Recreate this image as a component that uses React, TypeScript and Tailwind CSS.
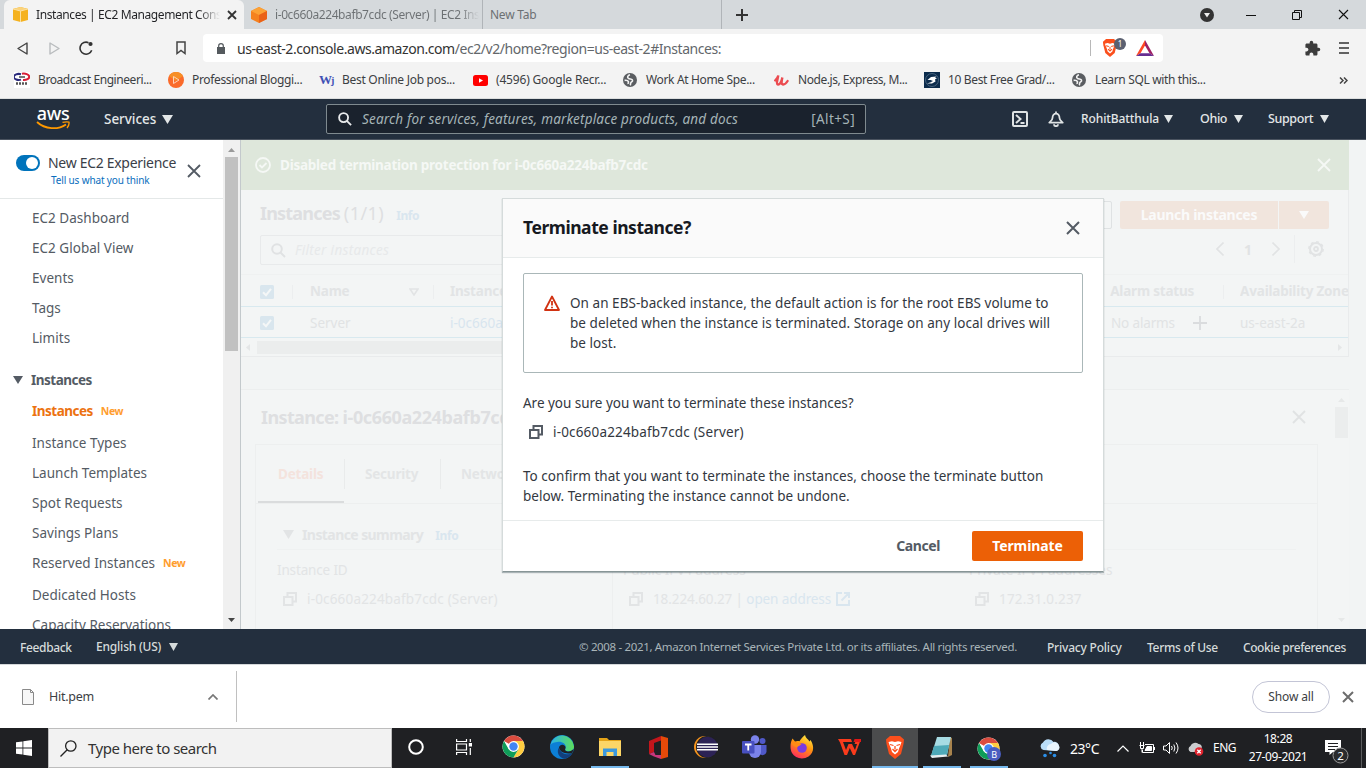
import React from "react";
import { MdExtension } from "react-icons/md";

function Caret({ className = "", w = 10, h = 8 }: { className?: string; w?: number; h?: number }) {
  return (
    <svg width={w} height={h} viewBox="0 0 10 8" preserveAspectRatio="none" className={"shrink-0 " + className} fill="currentColor">
      <path d="M0 0H10L5 8Z" />
    </svg>
  );
}

function Cross({ size = 14, stroke = 2, className = "" }: { size?: number; stroke?: number; className?: string }) {
  return (
    <svg width={size} height={size} viewBox={`0 0 ${size} ${size}`} className={"shrink-0 " + className} stroke="currentColor" strokeWidth={stroke} fill="none">
      <path d={`M1 1L${size - 1} ${size - 1}M${size - 1} 1L1 ${size - 1}`} />
    </svg>
  );
}

function CopyIcon({ className = "" }: { className?: string }) {
  return (
    <svg width="14" height="14" viewBox="0 0 14 14" className={"shrink-0 " + className} fill="none" stroke="currentColor" strokeWidth="2">
      <path d="M1 5H9.5V13H1Z" />
      <path d="M4.5 4V1H13V9.5H10" />
    </svg>
  );
}

function SearchIcon({ size, className = "" }: { size: number; className?: string }) {
  return (
    <svg width={size} height={size} viewBox="0 0 15 15" className={"shrink-0 " + className} fill="none" stroke="currentColor" strokeWidth="2">
      <circle cx="6" cy="6" r="4.8" />
      <path d="M9.5 9.5L14 14" />
    </svg>
  );
}

function Globe() {
  return (
    <svg width="14" height="14" viewBox="0 0 14 14" className="shrink-0">
      <circle cx="7" cy="7" r="7" fill="#5a5d61" />
      <path d="M7 1.8C4.6 2.4 4 4.4 5.4 5.4C6.8 6.4 9.4 5.6 9.6 7.4C9.8 8.8 8.2 8.8 7.8 9.8C7.4 10.800 7.6 11.800 7.2 12.200M1.600 7.400C3 7.200 5 7.600 5.400 8.600C5.700 9.500 5 10 5.200 11" fill="none" stroke="#f3f3f3" strokeWidth="1.600" />
    </svg>
  );
}

function BraveLion({ w, h }: { w: number; h: number }) {
  return (
    <svg width={w} height={h} viewBox="0 0 20 23" className="shrink-0">
      <path d="M5 0H15L19 3.500L18.500 8L16 18L10 23L4 18L1.500 8L1 3.500Z" fill="#fb4f1c" />
      <path d="M3.500 6L7 5.200L10 6L13 5.200L16.500 6L15.500 9L14 12.500L13 16L10 18.500L7 16L6 12.500L4.500 9Z" fill="#fff" />
      <path d="M5 8.500L8.500 9.500M15 8.500L11.500 9.500M10 10V13.500M7.500 13L10 15.500L12.500 13" stroke="#fb4f1c" strokeWidth="1.300" fill="none" />
    </svg>
  );
}

function Tabs() {
  return (
    <div className="flex h-[29px] bg-[#d5d9dc] pl-1 text-[12px] tracking-[-0.4px]">
      <div className="flex w-[240px] items-center rounded-t-md bg-[#f3f3f3] pl-[9px]">
        <svg width="15" height="15" viewBox="0 0 15 15" className="shrink-0">
          <path d="M0 2L7.5 0L15 2V13L7.5 15L0 13Z" fill="#f5b21f" />
          <path d="M0 2L7.5 4L15 2L7.5 0Z" fill="#fbd37b" />
          <path d="M7.5 4V15M0 2L7.5 4L15 2" stroke="#fce0a0" strokeWidth="1" fill="none" />
        </svg>
        <span className="ml-2 w-[184px] overflow-hidden bg-gradient-to-r from-[#202124] from-88% to-transparent bg-clip-text whitespace-nowrap text-transparent">Instances | EC2 Management Console</span>
        <Cross size={10} stroke={1.8} className="ml-[7px] text-[#333]" />
      </div>
      <div className="flex w-[239px] items-center border-r border-[#b0b4b8] pl-[7px]">
        <svg width="16" height="16" viewBox="0 0 16 16" className="shrink-0">
          <path d="M8 0L16 4V12L8 16L0 12V4Z" fill="#f58220" />
          <path d="M8 0L16 4L8 8L0 4Z" fill="#fca236" />
          <path d="M8 8L16 4V12L8 16Z" fill="#ea6218" />
        </svg>
        <span className="ml-2 w-[204px] overflow-hidden bg-gradient-to-r from-[#6c7073] from-90% to-transparent bg-clip-text whitespace-nowrap text-transparent">i-0c660a224bafb7cdc (Server) | EC2 Instances</span>
      </div>
      <div className="flex w-[239px] items-center border-r border-[#b0b4b8] pl-[7px] tracking-[-0.25px] text-[#6c7073]">New Tab</div>
      <svg width="12" height="12" viewBox="0 0 12 12" className="mt-[9px] ml-[14px]" stroke="#333" strokeWidth="2"><path d="M6 0V12M0 6H12" /></svg>
      <div className="ml-auto flex items-center">
        <svg width="14" height="14" viewBox="0 0 14 14" className="mr-[32px]"><circle cx="7" cy="7" r="7" fill="#333" /><path d="M4 5H10L7 9.5Z" fill="#eee" /></svg>
        <svg width="10" height="10" viewBox="0 0 10 10" className="mr-[36px]" stroke="#111"><path d="M0 5.5H10" /></svg>
        <svg width="10" height="10" viewBox="0 0 10 10" className="mr-[36px]" stroke="#111" fill="none"><path d="M0.5 2.5H7.5V9.5H0.5ZM2.5 2.5V0.5H9.5V7.5H7.5" /></svg>
        <Cross size={11} stroke={1.1} className="mr-[17px] text-[#111]" />
      </div>
    </div>
  );
}

function Toolbar() {
  return (
    <div className="flex h-[38px] items-center bg-[#f3f3f3]">
      <svg width="11" height="13" viewBox="0 0 11 13" className="ml-[17px]" fill="none" stroke="#444" strokeWidth="1.4" strokeLinejoin="round"><path d="M10 1V12L1 6.5Z" /></svg>
      <svg width="11" height="13" viewBox="0 0 11 13" className="ml-[21px]" fill="none" stroke="#b9bcbe" strokeWidth="1.4" strokeLinejoin="round"><path d="M1 1V12L10 6.5Z" /></svg>
      <svg width="14" height="14" viewBox="0 0 14 14" className="ml-[19px]" fill="none" stroke="#333" strokeWidth="1.6"><path d="M9.500 1.700A6 6 0 1 0 12.700 9.200" /><circle cx="11.500" cy="3" r="2.100" fill="#333" stroke="none" /></svg>
      <svg width="10" height="14" viewBox="0 0 10 14" className="ml-[83px]" fill="none" stroke="#444" strokeWidth="1.5"><path d="M1 1H9V12.5L5 9.5L1 12.5Z" /></svg>
      <div className="ml-[17px] flex h-[28px] w-[960px] items-center rounded bg-white pl-[14px]">
        <svg width="8" height="11" viewBox="0 0 8 11" className="shrink-0"><path d="M0 4H8V11H0Z" fill="#555a5e" /><path d="M1.7 4.5V2.8A2.3 2.1 0 0 1 6.3 2.8V4.5" fill="none" stroke="#555a5e" strokeWidth="1.2" /></svg>
        <span className="ml-[12px] text-[14px] tracking-[-0.44px] text-[#63676b]"><span className="text-[#333]">us-east-2.console.aws.amazon.com</span>/ec2/v2/home?region=us-east-2#Instances:</span>
        <div className="ml-auto flex items-center">
          <div className="h-4 w-px bg-[#b8b8b8]" />
          <div className="relative ml-[11px] h-[18px] w-[16px]"><BraveLion w={16} h={18} /><span className="absolute -top-[1px] left-[12px] flex h-[12px] w-[12px] items-center justify-center rounded-full bg-[#5b6070] text-[8px] text-white">1</span></div>
          <svg width="18" height="16" viewBox="0 0 18 16" className="mr-[9px] ml-[18px]">
            <path d="M9 0L0 16L4.5 13.2L9 5.5Z" fill="#ff4724" /><path d="M9 0L18 16L13.5 13.2L9 5.5Z" fill="#9e1f63" /><path d="M0 16H18L13.5 13.2H4.5Z" fill="#662d91" />
          </svg>
        </div>
      </div>
      <MdExtension size={17} className="ml-auto text-[#3c3c3c]" />
      <svg width="10" height="12" viewBox="0 0 10 12" className="mr-[17px] ml-[18px]" stroke="#333" strokeWidth="1.5"><path d="M0 1H10M0 6H10M0 11H10" /></svg>
    </div>
  );
}

function Bookmarks() {
  return (
    <div className="flex h-[32px] items-center border-b border-[#dcdede] bg-[#f3f3f3] pb-[5px] pl-[14px] text-[12px] tracking-[-0.35px] whitespace-nowrap text-[#3c4043]">
      <div className="flex w-[154px] items-center tracking-[-0.42px]">
        <svg width="16" height="16" viewBox="0 0 16 16" className="mr-2"><path d="M0 0H16V16H0Z" fill="#fff" /><path d="M7 2.2A5 3 0 1 0 7 7.6" fill="none" stroke="#2a2a7c" strokeWidth="2" /><path d="M8 1.8A5.5 3.2 0 1 1 9 8" fill="none" stroke="#d81f36" strokeWidth="2" /><path d="M5 5H11" stroke="#777" strokeWidth="2" /><path d="M2 11.500H14" stroke="#555" strokeWidth="2.400" strokeDasharray="2 1" /></svg>
        Broadcast Engineeri...
      </div>
      <div className="flex w-[151px] items-center">
        <svg width="16" height="16" viewBox="0 0 16 16" className="mr-2"><circle cx="8" cy="8" r="8" fill="#fa6a2a" /><path d="M1 4A8 8 0 0 1 15 4L8 9Z" fill="#f78f25" /><path d="M5.5 4.5V11.5L11 8Z" fill="none" stroke="#ffd3b8" strokeWidth="1" /></svg>
        Professional Bloggi...
      </div>
      <div className="flex w-[154px] items-center tracking-[-0.28px]">
        <span className="mr-[7px] w-[16px] font-['Liberation_Serif'] text-[13px] font-bold tracking-[-1px] text-[#3f51b5]">W<span className="text-[10px]">j</span></span>
        Best Online Job pos...
      </div>
      <div className="flex w-[150px] items-center tracking-[-0.18px]">
        <svg width="15" height="11" viewBox="0 0 15 11" className="mr-[8px]"><rect width="15" height="11" rx="2.5" fill="#f00" /><path d="M6 3.2V7.8L10 5.5Z" fill="#fff" /></svg>
        (4596) Google Recr...
      </div>
      <div className="flex w-[151px] items-center gap-[9px]"><Globe />Work At Home Spe...</div>
      <div className="flex w-[150px] items-center tracking-[-0.45px]">
        <svg width="15" height="12" viewBox="0 0 15 12" className="mr-[9px]" fill="none" stroke="#eb4b50" strokeWidth="2.3" strokeLinecap="round"><path d="M1.2 6.5C2.5 5 4 3 4.3 1.5C4 4.5 1.6 10.2 4 10.5S7.6 6.5 8.4 3.5C7.6 7 7 10.4 9 10.5S13 8 13.6 7" /></svg>
        Node.js, Express, M...
      </div>
      <div className="flex w-[148px] items-center">
        <svg width="16" height="16" viewBox="0 0 16 16" className="mr-[8px]"><path d="M0 0H16V16H0Z" fill="#0b2b4c" /><circle cx="8" cy="8" r="6.5" fill="none" stroke="#5f7890" strokeWidth=".7" /><path d="M3.500 8L7 5L12.500 4.500L11 6H13L11 7.500L11.500 9.500L8 11.500H3L6 10.500L9 9.500L6.500 9L9 8Z" fill="#fff" /></svg>
        10 Best Free Grad/...
      </div>
      <div className="flex items-center gap-[9px]"><Globe />Learn SQL with this...</div>
      <svg width="9" height="7" viewBox="0 0 9 7" className="mr-[18px] ml-auto" fill="none" stroke="#444" strokeWidth="1.5"><path d="M1 .5L4 3.5L1 6.5M5 .5L8 3.5L5 6.5" /></svg>
    </div>
  );
}

function AwsHeader() {
  return (
    <div className="flex h-[41px] items-center border-b border-[#4b5460] bg-[#232f3e] text-[#e3e7e8]">
      <div className="ml-[36px] flex w-[34px] flex-col items-center">
        <span className="h-[15px] text-[18px] leading-[11px] font-medium tracking-[-0.3px] text-white">aws</span>
        <svg width="34" height="9" viewBox="0 0 34 9" className="-mt-[2px]"><path d="M1 1C9 8.5 22 9 30 3.4" fill="none" stroke="#f90" strokeWidth="1.800" /><path d="M26.5 1.4C29 .8 31.5 .6 33 1.2C33.3 3.2 32.4 5.4 31 7" fill="none" stroke="#f90" strokeWidth="1.300" /></svg>
      </div>
      <span className="ml-[34px] w-[52px] text-[13.5px] font-medium tracking-[-0.05px]">Services</span>
      <Caret w={11} h={9} className="ml-[6px]" />
      <div className="ml-[153px] flex h-[30px] w-[540px] shrink-0 items-center rounded-xs border border-[#7f8a8f] bg-[#1a222d] pr-[10px] pl-[11px] text-[13.5px] text-[#a5b4b7]">
        <SearchIcon size={14} className="text-[#e9ebed]" />
        <span className="ml-[10px] tracking-[0.18px] whitespace-nowrap italic">Search for services, features, marketplace products, and docs</span>
        <span className="ml-auto tracking-[0.4px]">[Alt+S]</span>
      </div>
      <svg width="16" height="16" viewBox="0 0 16 16" className="ml-auto shrink-0" fill="none" stroke="#dfe3e4" strokeWidth="2"><rect x="1" y="1" width="14" height="14" rx="1" /><path d="M4 4L8.5 8L4 12M8.5 12H12.5" /></svg>
      <svg width="16" height="16" viewBox="0 0 16 16" className="ml-[20px] shrink-0" fill="none" stroke="#dfe3e4" strokeWidth="1.8" strokeLinejoin="round"><path d="M8 .5V2M4.5 7A3.5 4.5 0 0 1 11.5 7C11.5 9 13 10 14.7 11.6H1.3C3 10 4.5 9 4.5 7ZM6 13.2A2 2 0 0 0 10 13.2" /></svg>
      <div className="flex text-[12.5px] font-medium tracking-[-0.38px]">
        <div className="ml-[17px] flex w-[119px] items-center tracking-[-0.1px]"><span className="w-[83px] text-[12px] whitespace-nowrap">RohitBatthula</span><Caret w={9} /></div>
        <div className="flex w-[68px] items-center"><span className="w-[34px]">Ohio</span><Caret w={9} /></div>
        <div className="flex w-[98px] items-center"><span className="w-[52px]">Support</span><Caret w={9} /></div>
      </div>
    </div>
  );
}

function NavItem({ label, isNew, active }: { label: string; isNew?: boolean; active?: boolean }) {
  return (
    <div className={"flex shrink-0 items-center pl-[32px] " + (active ? "h-8" : "h-[30px]")}>
      <span className={active ? "font-bold tracking-[-0.5px] text-[#ec7211]" : ""}>{label}</span>
      {isNew && <span className="mt-[2px] ml-[8px] text-[10.5px] font-bold tracking-[-0.4px] text-[#ff9d2e]">New</span>}
    </div>
  );
}

function Sidebar() {
  return (
    <aside className="flex h-[489px] w-[241px] shrink-0 border-r border-[#c3c9cc] bg-white">
      <div className="flex w-[223px] flex-col overflow-hidden text-[13.5px] tracking-[0.02px] text-[#545b64]">
        <div className="flex h-[59px] shrink-0 border-b border-[#e4e8e8] pl-[16px]">
          <div className="mt-[15px] flex h-[16px] w-[24px] shrink-0 items-center justify-end rounded-full bg-[#0073bb] pr-[2px]"><div className="h-[12px] w-[12px] rounded-full bg-white" /></div>
          <div className="ml-[8px] w-[130px] pt-[13px] whitespace-nowrap">
            <div className="text-[14px] leading-[20px] tracking-[-0.3px] text-[#3a4048]">New EC2 Experience</div>
            <div className="ml-[3px] text-[10px] leading-[15px] tracking-[-0.14px] text-[#0a6ebd]">Tell us what you think</div>
          </div>
          <Cross size={14} stroke={1.8} className="mt-[24px] ml-[9px] text-[#545b64]" />
        </div>
        <div className="h-[4px] shrink-0" />
        <NavItem label="EC2 Dashboard" />
        <NavItem label="EC2 Global View" />
        <NavItem label="Events" />
        <NavItem label="Tags" />
        <NavItem label="Limits" />
        <div className="mt-[12px] flex h-[30px] shrink-0 items-center pl-[13px] font-bold tracking-[-0.5px]"><Caret className="mr-[8px]" />Instances</div>
        <NavItem label="Instances" isNew active />
        <div className="h-[1px] shrink-0" />
        <NavItem label="Instance Types" />
        <NavItem label="Launch Templates" />
        <NavItem label="Spot Requests" />
        <NavItem label="Savings Plans" />
        <NavItem label="Reserved Instances" isNew />
        <div className="h-[2px] shrink-0" />
        <NavItem label="Dedicated Hosts" />
        <NavItem label="Capacity Reservations" />
      </div>
      <div className="flex w-[17px] flex-col items-center bg-[#f0f0f0]">
        <Caret w={7} h={4} className="mt-[8px] rotate-180 text-[#9a9a9a]" />
        <div className="mt-[5px] h-[194px] w-[13px] bg-[#c1c1c1]" />
        <Caret w={7} h={4} className="mt-auto mb-[7px] text-[#444]" />
      </div>
    </aside>
  );
}

function Check() {
  return (
    <svg width="14" height="14" viewBox="0 0 14 14" className="shrink-0"><rect width="14" height="14" rx="1.5" fill="#d9e6ee" /><path d="M3 7.2L6 10.2L11 3.8" stroke="#f5f7f7" strokeWidth="2" fill="none" /></svg>
  );
}

function InstanceTable() {
  return (
    <section className="flex h-[167px] flex-col border-r border-b border-[#e9ebec] bg-[#f3f5f5]">
      <div className="flex h-[45px] shrink-0 items-center pl-[19px]">
        <h2 className="mt-[2px] text-[18px] font-bold tracking-[-0.8px] text-[#dedfe1]">Instances <span className="font-normal tracking-[0.45px]">(1/1)</span></h2>
        <span className="mt-[6px] ml-[12px] text-[12px] font-bold tracking-[-0.4px] text-[#d9e6ef]">Info</span>
        <div className="mt-[4px] mr-[8px] ml-auto h-[28px] w-[90px] rounded-xs border border-[#dfe2e3]" />
        <div className="mt-[4px] flex h-[28px] w-[158px] items-center justify-center rounded-l-xs bg-[#f1e5dd] text-[14px] font-bold tracking-[-0.28px] text-[#fafafa]">Launch instances</div>
        <div className="mt-[4px] mr-[19px] ml-px flex h-[28px] w-[50px] items-center justify-center rounded-r-xs bg-[#f1e5dd] text-[#fafafa]"><Caret /></div>
      </div>
      <div className="flex h-[39px] shrink-0 pl-[19px]">
        <div className="flex h-[30px] w-[500px] items-center rounded-xs border border-[#e8eaeb] pl-[10px] text-[13.5px] tracking-[0.3px] text-[#e7e9ea] italic"><SearchIcon size={15} className="mr-[9px] text-[#e0e2e3]" />Filter instances</div>
        <div className="mr-[24px] ml-auto flex h-[28px] items-center text-[#e1e3e4]">
          <svg width="8" height="14" viewBox="0 0 8 14" fill="none" stroke="currentColor" strokeWidth="1.6"><path d="M7.5 .5L1 7L7.5 13.5" /></svg>
          <span className="w-[48px] text-center text-[14px] font-bold">1</span>
          <svg width="8" height="14" viewBox="0 0 8 14" fill="none" stroke="currentColor" strokeWidth="1.6"><path d="M.5 .5L7 7L.5 13.5" /></svg>
          <div className="mr-[13px] ml-[14px] h-[28px] w-px bg-[#eceeef]" />
          <svg width="16" height="16" viewBox="0 0 16 16" fill="none" stroke="currentColor"><circle cx="8" cy="8" r="6" strokeWidth="2" /><circle cx="8" cy="8" r="7.2" strokeWidth="1.4" strokeDasharray="2.8 2.85" /><circle cx="8" cy="8" r="2" strokeWidth="1.8" /></svg>
        </div>
      </div>
      <div className="flex h-[33px] shrink-0 items-center border-y border-t-[#eff1f1] border-b-[#d8e9ef] pt-[2px] pl-[19px] text-[13.5px] font-bold tracking-[-0.2px] whitespace-nowrap text-[#e2e4e5]">
        <Check />
        <div className="ml-[18px] h-[14px] w-px bg-[#eceeef]" />
        <span className="ml-[17px] w-[99px]">Name</span>
        <svg width="10" height="8" viewBox="0 0 10 8" fill="none" stroke="currentColor" strokeWidth="1.6"><path d="M1 1H9L5 7Z" /></svg>
        <div className="ml-[14px] h-[14px] w-px bg-[#eceeef]" />
        <span className="ml-[16px] w-[661px]">Instance ID</span>
        <span className="w-[113px]">Alarm status</span>
        <div className="mr-[16px] h-[14px] w-px bg-[#eceeef]" />
        <span className="w-[108px] overflow-hidden">Availability Zone</span>
      </div>
      <div className="flex h-[31px] shrink-0 items-center border-b border-[#d8e9ef] pt-[2px] pl-[19px] text-[13.5px] whitespace-nowrap text-[#e1e3e4]">
        <Check />
        <span className="ml-[36px] w-[140px]">Server</span>
        <span className="w-[661px] text-[#d8e5ef]">i-0c660a224bafb7cdc</span>
        <span className="w-[82px] tracking-[-0.15px]">No alarms</span>
        <svg width="14" height="14" viewBox="0 0 14 14" stroke="#dadcde" strokeWidth="1.8"><path d="M7 0V14M0 7H14" /></svg>
        <span className="ml-[33px]">us-east-2a</span>
      </div>
      <div className="flex h-[18px] items-center pr-[6px] pl-[5px] text-[#e4e6e7]">
        <svg width="4" height="7" viewBox="0 0 4 7" fill="currentColor"><path d="M4 0V7L0 3.5Z" /></svg>
        <div className="ml-[7px] h-[13px] w-[840px] bg-[#ebeded]" />
        <svg width="4" height="7" viewBox="0 0 4 7" fill="currentColor" className="ml-auto"><path d="M0 0V7L4 3.5Z" /></svg>
      </div>
    </section>
  );
}

function DetailPanel() {
  return (
    <section className="mt-[32px] flex h-[241px] border-t border-[#eceeee] bg-[#f3f5f5]">
      <div className="flex w-[1092px] flex-col">
        <div className="flex h-[54px] shrink-0 items-center justify-between pr-[27px] pl-[20px]">
          <h2 className="text-[18px] font-bold tracking-[-0.62px] text-[#dedfe1]">Instance: <span className="tracking-[-0.4px]">i-0c660a224bafb7cdc (Server)</span></h2>
          <Cross size={14} stroke={1.8} className="text-[#e0e2e3]" />
        </div>
        <div className="ml-[14px] flex w-[1063px] grow flex-col border-x border-t border-[#edefef]">
          <div className="flex h-[59px] items-center border-b border-[#edefef] text-[13.5px] font-bold tracking-[-0.2px] text-[#e3e5e6]">
            <div className="ml-[2px] flex h-[58px] w-[86px] items-center border-b-2 border-[#dadcdd] pt-[2px] pl-[20px] text-[#f4e3dd]">Details</div>
            <div className="flex h-[30px] w-[97px] items-center border-x border-[#e9ebeb] pl-[20px]">Security</div>
            <span className="ml-[20px]">Networking</span>
          </div>
          <div className="mx-[21px] flex h-[46px] items-end border-b border-[#eff1f1] pb-[4px] text-[14px] font-bold tracking-[-0.58px] text-[#e2e4e5]">
            <Caret w={11} h={9} className="mr-[8px] mb-[6px] ml-[6px]" />Instance summary
            <span className="ml-[12px] text-[12px] tracking-[-0.3px] text-[#d9e6ef]">Info</span>
          </div>
          <div className="grid grow grid-cols-[335px_347px_1fr] pl-[21px] text-[13.5px] tracking-[-0.15px] text-[#e2e4e5]">
            <div className="pt-[10px]">
              <div className="h-[29px] leading-[20px]">Instance ID</div>
              <div className="flex h-[20px] items-center pl-[6px] tracking-[0.17px]"><CopyIcon className="mr-[10px]" />i-0c660a224bafb7cdc (Server)</div>
            </div>
            <div className="border-l border-[#edefef] pt-[10px] pl-[10px]">
              <div className="h-[29px] leading-[20px] tracking-[0px]">Public IPv4 address</div>
              <div className="flex h-[20px] items-center pl-[6px] tracking-[-0.1px]"><CopyIcon className="mr-[10px]" />18.224.60.27 |&nbsp;<span className="text-[#d9e6ef]">open address</span>
                <svg width="14" height="14" viewBox="0 0 14 14" className="ml-[5px]" fill="none" stroke="#d9e6ef" strokeWidth="2"><path d="M6 1H1V13H13V8M8 1H13V6M13 1L5.5 8.5" /></svg>
              </div>
            </div>
            <div className="pt-[10px] pl-[10px]">
              <div className="h-[29px] leading-[20px] tracking-[0.04px]">Private IPv4 addresses</div>
              <div className="flex h-[20px] items-center pl-[6px] tracking-[0.2px]"><CopyIcon className="mr-[10px]" />172.31.0.237</div>
            </div>
          </div>
        </div>
      </div>
      <div className="flex w-[16px] flex-col items-center text-[#e6e8e8]">
        <Caret w={7} h={4} className="mt-[8px] rotate-180" />
        <div className="mt-[5px] h-[31px] w-[13px] bg-[#ebeded]" />
        <Caret w={7} h={4} className="mt-auto mb-[7px]" />
      </div>
    </section>
  );
}

function Modal() {
  return (
    <div className="absolute top-[198px] left-[502px] flex h-[374px] w-[602px] flex-col border border-[#d5dbdb] border-b-[#879596] bg-white text-[13.5px] text-[#33383f] shadow-[0_1px_1px_rgba(0,28,36,0.3)]">
      <div className="flex h-[59px] shrink-0 items-center justify-between border-b border-[#e7ebeb] bg-[#fafafa] pr-[23px] pl-[20px]">
        <h1 className="mb-[2px] text-[17.5px] font-bold tracking-[-0.45px] text-[#16191f]">Terminate instance?</h1>
        <Cross size={14} stroke={2} className="text-[#545b64]" />
      </div>
      <div className="mx-[20px] mt-[15px] flex h-[100px] shrink-0 rounded-xs border border-[#aab7b8] pt-[19px] pl-[20px]">
        <svg width="16" height="16" viewBox="0 0 16 16" className="mt-[2px] mr-[10px] shrink-0" fill="none" stroke="#d13212" strokeWidth="1.8"><path d="M8 1.5L15 15H1Z" strokeLinejoin="round" /><path d="M8 6V10.5M8 11.7V13.3" /></svg>
        <p className="leading-[20px] tracking-[0.05px] whitespace-nowrap">On an EBS-backed instance, the default action is for the root EBS volume to<br />be deleted when the instance is terminated. Storage on any local drives will<br />be lost.</p>
      </div>
      <p className="mt-[20px] ml-[20px] leading-[20px] tracking-[-0.02px]">Are you sure you want to terminate these instances?</p>
      <div className="mt-[9px] flex h-[20px] items-center pl-[26px] tracking-[0.17px]"><CopyIcon className="mr-[10px] text-[#545b64]" />i-0c660a224bafb7cdc (Server)</div>
      <p className="mt-[24px] ml-[20px] leading-[20px] tracking-[0.03px] whitespace-nowrap">To confirm that you want to terminate the instances, choose the terminate button<br />below. Terminating the instance cannot be undone.</p>
      <div className="mt-auto flex h-[51px] shrink-0 items-center justify-end border-t border-[#e7ebeb] pr-[20px] text-[14px] font-bold tracking-[-0.4px]">
        <span className="mr-[32px] mb-[2px] text-[#545b64]">Cancel</span>
        <div className="flex h-[30px] w-[111px] items-center justify-center rounded-xs bg-[#ec6006] pb-[2px] tracking-[-0.1px] text-white">Terminate</div>
      </div>
    </div>
  );
}

function Footer() {
  return (
    <footer className="flex h-[35px] items-center bg-[#232f3e] text-[12px] font-medium tracking-[-0.2px] whitespace-nowrap text-[#d5dbdb]">
      <span className="ml-[20px] w-[76px] pt-[2px] tracking-[-0.35px]">Feedback</span>
      <span className="w-[73px]">English (US)</span><Caret w={9} />
      <span className="ml-auto w-[468px] text-[11.5px] font-normal tracking-[-0.34px] text-[#a9b5b9]">© 2008 - 2021, Amazon Internet Services Private Ltd. or its affiliates. All rights reserved.</span>
      <span className="w-[100px] pt-[2px]">Privacy Policy</span>
      <span className="w-[96px] pt-[2px] tracking-[-0.3px]">Terms of Use</span>
      <span className="w-[123px] pt-[2px] tracking-[-0.42px]">Cookie preferences</span>
    </footer>
  );
}

function Downloads() {
  return (
    <div className="flex h-[64px] items-center border-t border-[#d5d8da] bg-white text-[12px]">
      <div className="flex h-[51px] w-[237px] items-center border-r border-[#c0c0c0] pl-[22px] text-[#3c4043]">
        <svg width="12" height="16" viewBox="0 0 12 16" fill="#f7f7f7" stroke="#8a8a8a"><path d="M.5 .5H8.5L11.5 3.5V15.5H.5ZM8.5 .5V3.5H11.5" /></svg>
        <span className="mt-[2px] ml-[15px] text-[12.5px] tracking-[-0.25px]">Hit.pem</span>
        <svg width="10" height="6" viewBox="0 0 10 6" className="mr-[18px] ml-auto" fill="none" stroke="#777" strokeWidth="1.7"><path d="M.5 5.5L5 1L9.500 5.5" /></svg>
      </div>
      <div className="ml-auto flex h-[32px] w-[78px] items-center justify-center rounded-full border border-[#c3c5d6] tracking-[-0.15px] text-[#3c4043]">Show all</div>
      <Cross size={12} stroke={2} className="mr-[12px] ml-[12px] text-[#6d6d6d]" />
    </div>
  );
}

function Chrome({ badge }: { badge?: boolean }) {
  return (
    <svg width="24" height="24" viewBox="0 0 24 24">
      <circle cx="11.500" cy="11.500" r="11" fill="#fff" />
      <path d="M11.500 11.500L2 6A11 11 0 0 1 21 6H11.500Z" fill="#db4c3f" />
      <path d="M11.500 6H21A11 11 0 0 1 11.500 22.500L16.300 14.200Z" fill="#ffcd40" />
      <path d="M6.700 14.200L2 6A11 11 0 0 0 11.500 22.500L16.300 14.200Z" fill="#0f9d58" />
      <circle cx="11.500" cy="11.500" r="5.400" fill="#fff" /><circle cx="11.500" cy="11.500" r="4.200" fill="#4285f4" />
      {badge && <><circle cx="17" cy="17" r="7" fill="#4a5dc0" /><text x="14.300" y="20.500" fontSize="9" fill="#fff">B</text></>}
    </svg>
  );
}

function TaskCell({ children, running, active, narrow }: { children: React.ReactNode; running?: boolean; active?: boolean; narrow?: boolean }) {
  return (
    <div className={"flex h-10 shrink-0 items-center justify-center " + (narrow ? "w-[46px] " : "w-12 ") + (active ? "bg-[#4b4c4d]" : "")}>
      <div className={"flex h-10 items-center justify-center " + (active ? "w-[46px] border-b-2 border-[#76b9ed]" : running ? "w-[38px] border-b-2 border-[#76b9ed]" : "w-[38px] border-b-2 border-transparent")}>{children}</div>
    </div>
  );
}

function Taskbar() {
  return (
    <div className="flex h-10 bg-[#1f2023] text-white">
      <div className="flex w-12 items-center justify-center">
        <svg width="16" height="16" viewBox="0 0 16 16" fill="#fff"><path d="M0 2.300L6.500 1.400V7.600H0ZM7.300 1.300L16 0V7.600H7.300ZM0 8.400H6.500V14.600L0 13.700ZM7.300 8.400H16V16L7.300 14.700Z" /></svg>
      </div>
      <div className="flex w-[344px] items-center border border-[#bdbdbd] bg-[#f2f2f2] pl-[11px] text-[15px] tracking-[-0.5px] text-[#333]">
        <svg width="17" height="17" viewBox="0 0 17 17" fill="none" stroke="#222" strokeWidth="1.300"><circle cx="10.800" cy="6" r="5.200" /><path d="M7.200 9.800L.5 16.500" /></svg>
        <span className="ml-[11px]">Type here to search</span>
      </div>
      <TaskCell><svg width="16" height="16" viewBox="0 0 16 16" fill="none" stroke="#fff" strokeWidth="2"><circle cx="8" cy="8" r="6.800" /></svg></TaskCell>
      <TaskCell><svg width="16" height="16" viewBox="0 0 16 16" fill="none" stroke="#fff" strokeWidth="1.200"><path d="M.6 0V2.500H10.500V0M.6 16V13.500H10.500V16M.6 5H10.500V11H.6ZM14.300 0V3M14.300 9V16" /><path d="M12.800 4H16V7.500H12.800Z" fill="#fff" stroke="none" /></svg></TaskCell>
      <div className="w-[2px]" />
      <TaskCell><Chrome /></TaskCell>
      <TaskCell>
        <svg width="24" height="24" viewBox="0 0 24 24">
          <defs><linearGradient id="edgeTop" x1="0" x2="1"><stop offset="0" stopColor="#2bb3e8" /><stop offset="1" stopColor="#5ede5a" /></linearGradient></defs>
          <circle cx="12" cy="12" r="12" fill="#0c7fd6" />
          <path d="M.3 10A12 12 0 0 1 24 11.500C24 15 21 16.500 18 16.300C15.500 16 14.500 15 15.500 13.500C17 10 13 6.500 8.500 6.800C4.500 7 1.500 8.500 .3 10Z" fill="url(#edgeTop)" />
          <path d="M22 18.500C18 20.500 10 19 9 12.500C6 17 9 23 14.500 23.700C18 23.200 20.600 21.300 22 18.500Z" fill="#123f7c" />
          <path d="M9 12.500C9.500 10.500 11 9.500 12.800 9.800C15.500 10.300 16 12.500 15.300 13.700C14.500 15 15.500 16 17.500 16.400C19.500 16.700 22 16 23.500 14C23 16.500 22.500 17.500 22 18.500C18 18.800 10 18.500 9 12.500Z" fill="#1f2023" />
        </svg>
      </TaskCell>
      <TaskCell running>
        <svg width="22" height="18" viewBox="0 0 22 18"><path d="M0 0H8L10 2H22V18H0Z" fill="#e5a418" /><path d="M0 3H22V18H0Z" fill="#fcd667" /><path d="M4 18V10.500H18V18H14.500V14H7.500V18Z" fill="#3b98dd" /></svg>
      </TaskCell>
      <TaskCell><svg width="19" height="23" viewBox="0 0 19 23"><path d="M12 0L19 2V21L12 23V4.500Z" fill="#e64a09" /><path d="M12 0L0 5V18L5 16V7L12 4.500Z" fill="#c3161c" /><path d="M0 18L5 16L6.500 19H12V23L5 20.500Z" fill="#c8377c" /></svg></TaskCell>
      <TaskCell><svg width="24" height="22" viewBox="0 0 24 22"><circle cx="11" cy="11" r="11" fill="#f7941e" /><circle cx="13" cy="11" r="11" fill="#1f2023" /><circle cx="13.500" cy="11" r="10.300" fill="#2c2255" /><path d="M3 8.200H24M3 11H24M3 13.800H24" stroke="#fff" strokeWidth="1.500" /></svg></TaskCell>
      <TaskCell>
        <svg width="25" height="24" viewBox="0 0 25 24"><circle cx="20.500" cy="6" r="3" fill="#5059c9" /><circle cx="13" cy="4.500" r="4.200" fill="#7b83eb" /><path d="M17 10H24.500V16.500A4 4 0 0 1 17 18Z" fill="#5059c9" /><path d="M7 10H19V17A6 6 0 0 1 7 17Z" fill="#7b83eb" /><rect y="6" width="12.500" height="12.500" rx="1" fill="#4850c0" /><path d="M3 9.500H9.500M6.250 9.500V15.500" stroke="#fff" strokeWidth="1.800" /></svg>
      </TaskCell>
      <TaskCell>
        <svg width="24" height="24" viewBox="0 0 24 24">
          <defs><linearGradient id="fox" x1=".8" y1="0" x2=".3" y2="1"><stop offset="0" stopColor="#fff04a" /><stop offset=".45" stopColor="#ff980e" /><stop offset="1" stopColor="#ff2a5f" /></linearGradient></defs>
          <path d="M2.500 3.500L5 6.500C6.500 5.800 8 5.800 9.500 6.200C11 4 12.500 2 15 0C15.500 3 18 4 19.500 6.500L20.500 5C24.500 11 24 18 18.500 21.500C13 25 5 23.500 2 18C-.5 13 .5 7 2.500 3.500Z" fill="url(#fox)" />
          <circle cx="12" cy="13" r="4.800" fill="#7a3be0" /><path d="M1.500 8C5 6 8 8 11.500 9C9.500 11 8 11 7 12.500C5 12 2.500 10.500 1.500 8Z" fill="#ff8a16" />
        </svg>
      </TaskCell>
      <TaskCell narrow><svg width="23" height="18" viewBox="0 0 23 18"><path d="M0 1H13L14 4H5L8 12L10.500 6H14L17 12L19 6H16.500L18.500 1H23L17 17H15L11.800 10L9 17H6.500L2 4.500Z" fill="#fa3b1c" /><path d="M16.500 1H23V4H15.500Z" fill="#e01818" /></svg></TaskCell>
      <TaskCell active narrow><BraveLion w={20} h={23} /></TaskCell>
      <TaskCell running><svg width="24" height="22" viewBox="0 0 24 22"><path d="M20 1L22 2V19L18 21Z" fill="#a8834d" /><path d="M7 1H21L17 19L1 20Z" fill="#a7dbe4" /><path d="M4 10L19 9L17 19L1 20Z" fill="#4ea9b8" /><path d="M0 19.500L16 18.500L18 20.500L2 22Z" fill="#e7eef0" /></svg></TaskCell>
      <TaskCell running narrow><div className="mt-1"><Chrome badge /></div></TaskCell>
      <div className="ml-[27px] flex items-center tracking-[-0.3px]">
        <svg width="22" height="20" viewBox="0 0 22 20"><path d="M4.500 12A4 4 0 0 1 4 4.500A6 6 0 0 1 14.500 4A4.500 4.500 0 0 1 20 8A3.500 3.500 0 0 1 17.500 13Z" fill="#b9ddf8" /><path d="M8 12A4.500 4.500 0 0 1 12 6A4.500 4.500 0 0 1 20 8A3.500 3.500 0 0 1 17.500 13Z" fill="#e8f4fd" /><circle cx="6" cy="17.500" r="1.800" fill="#2b8fe8" /><circle cx="11.500" cy="15" r="1.300" fill="#2b8fe8" /><circle cx="15.500" cy="17.500" r="1.800" fill="#2b8fe8" /></svg>
        <span className="ml-[9px] w-[47px] text-[14px] tracking-[-0.45px]">23°C</span>
        <svg width="12" height="7" viewBox="0 0 12 7" fill="none" stroke="#fff" strokeWidth="1.200"><path d="M.5 6.500L6 1L11.500 6.500" /></svg>
        <svg width="16" height="12" viewBox="0 0 16 12" className="ml-[10px]" fill="none" stroke="#fff"><path d="M6 2.500H14.500V10.500H3.500V8" /><path d="M8 4.500H12.500V8.500H6Z" fill="#fff" /><path d="M15.500 5V8M.5 3.500H5.500M1.500 0V3.500M4.500 0V3.500M1.500 4V6.500H4.500V4M3 6.500V10.500" /></svg>
        <svg width="17" height="14" viewBox="0 0 17 14" className="ml-[8px]" fill="none" stroke="#fff"><path d="M.5 5V9H3L6.500 12.500V1.500L3 5ZM8.500 5Q10 7 8.500 9M10.800 3.500Q13 7 10.800 10.500M13 1.500Q17 7 13 12.500" /></svg>
        <svg width="17" height="15" viewBox="0 0 17 15" className="ml-[7px]"><path d="M3.500 11A3.300 3.300 0 0 1 3.500 5A5 5 0 0 1 11.500 3A3 3 0 0 1 14 8V11Z" fill="#c9cbcd" /><circle cx="12" cy="10.500" r="4.300" fill="#e0232e" /><path d="M10.300 8.800L13.700 12.200M13.700 8.800L10.300 12.200" stroke="#fff" strokeWidth="1.300" /></svg>
        <span className="ml-[9px] w-[31px] text-[12px] tracking-[-0.5px]">ENG</span>
        <div className="w-[68px] text-center text-[12px] leading-[18px] tracking-[-0.4px]">18:28<br />27-09-2021</div>
      </div>
      <svg width="26" height="24" viewBox="0 0 26 24" className="mt-[12px] ml-[13px]"><path d="M0 0H16V12H8L4.500 15V12H0Z" fill="#fff" /><path d="M3 3.500H13M3 6.500H13M3 9.500H10" stroke="#1f2023" /><circle cx="15.500" cy="15.500" r="7.500" fill="#2a2b2d" stroke="#999" /><text x="12.300" y="19.500" fontSize="11.500" fill="#fff">2</text></svg>
      <div className="ml-[10px] w-px bg-[#5a5b5d]" />
    </div>
  );
}

export default function App() {
  return (
    <div className="relative flex h-[768px] w-[1366px] flex-col overflow-hidden bg-white font-['Noto_Sans',sans-serif]">
      <Tabs />
      <Toolbar />
      <Bookmarks />
      <AwsHeader />
      <main className="flex h-[489px] overflow-hidden bg-[#f2f4f4]">
        <Sidebar />
        <div className="flex h-[489px] w-[1108px] flex-col">
          <div className="flex h-[50px] shrink-0 items-center bg-[#dee7db] pr-[18px] pl-[14px] text-[#f5f8f5]">
            <svg width="16" height="16" viewBox="0 0 16 16" fill="none" stroke="currentColor" strokeWidth="1.800"><circle cx="8" cy="8" r="7" /><path d="M4.500 8L7 10.500L11.500 6" /></svg>
            <span className="ml-[9px] text-[13.500px] font-bold tracking-[-0.25px]">Disabled termination protection for i-0c660a224bafb7cdc</span>
            <Cross size={14} stroke={1.800} className="ml-auto" />
          </div>
          <InstanceTable />
          <DetailPanel />
        </div>
      </main>
      <Footer />
      <Downloads />
      <Taskbar />
      <Modal />
    </div>
  );
}
